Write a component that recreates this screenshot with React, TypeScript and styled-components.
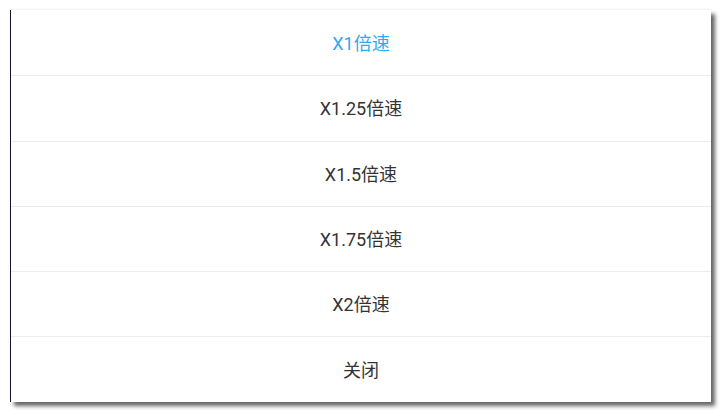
import styled, { createGlobalStyle } from "styled-components";

const GlobalStyle = createGlobalStyle`
	html, body {
		margin: 0;
		padding: 0;
		background: #ffffff;
	}
	body {
		font-family: Roboto, "Noto Sans CJK SC", sans-serif;
	}
`;

const Page = styled.div`
	width: 721px;
	height: 412px;
	padding: 10px 10px 0 10px;
	box-sizing: border-box;
`;

const Sheet = styled.div`
	width: 701px;
	display: flex;
	flex-direction: column;
	background: #ffffff;
	border-left: 1px solid #15142a;
	box-sizing: border-box;
	box-shadow: 4px 4px 4px rgba(0, 0, 0, 0.6), 0 -1px 2px rgba(0, 0, 0, 0.06);
`;

const Option = styled.div<{ $active?: boolean }>`
	height: 65.3px;
	display: flex;
	align-items: center;
	justify-content: center;
	padding-bottom: 2px;
	font-size: 18px;
	color: ${(p) => (p.$active ? "#2ea8f2" : "#333333")};
	box-sizing: border-box;
	& + & {
		border-top: 1px solid #ececec;
	}
`;

const speeds = ["X1倍速", "X1.25倍速", "X1.5倍速", "X1.75倍速", "X2倍速"];

const App = () => {
	return (
		<Page>
			<GlobalStyle />
			<Sheet>
				{speeds.map((s, i) => (
					<Option key={s} $active={i === 0}>
						{s}
					</Option>
				))}
				<Option>关闭</Option>
			</Sheet>
		</Page>
	);
};

export default App;
